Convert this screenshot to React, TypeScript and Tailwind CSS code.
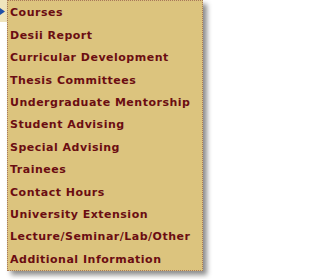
const items = [
  'Courses',
  'Desii Report',
  'Curricular Development',
  'Thesis Committees',
  'Undergraduate Mentorship',
  'Student Advising',
  'Special Advising',
  'Trainees',
  'Contact Hours',
  'University Extension',
  'Lecture/Seminar/Lab/Other',
  'Additional Information',
];

export default function App() {
  return (
    <div className="flex h-[279px] w-[217px] overflow-hidden bg-white font-['DejaVu_Sans',Verdana,sans-serif]">
      {/* parent item edge with arrow */}
      <div className="w-[7px] shrink-0">
        <div className="flex h-[22px] items-center bg-[#efe4bc]">
          <svg width="5" height="7" viewBox="0 0 5 7">
            <path d="M0 0 L5 3.5 L0 7 Z" fill="#1f4fa8" />
          </svg>
        </div>
      </div>

      {/* submenu */}
      <ul className="h-[271px] w-[196px] shrink-0 border border-dotted border-[#a8785a] bg-[#dcc47e] pt-[1.5px] shadow-[4px_4px_5px_rgba(0,0,0,0.45)]">
        {items.map((label) => (
          <li
            key={label}
            className="flex h-[22.4px] items-center whitespace-nowrap pl-[2px] text-[11px] font-bold tracking-[0.5px] text-[#6b0d12]"
          >
            {label}
          </li>
        ))}
      </ul>
    </div>
  );
}
